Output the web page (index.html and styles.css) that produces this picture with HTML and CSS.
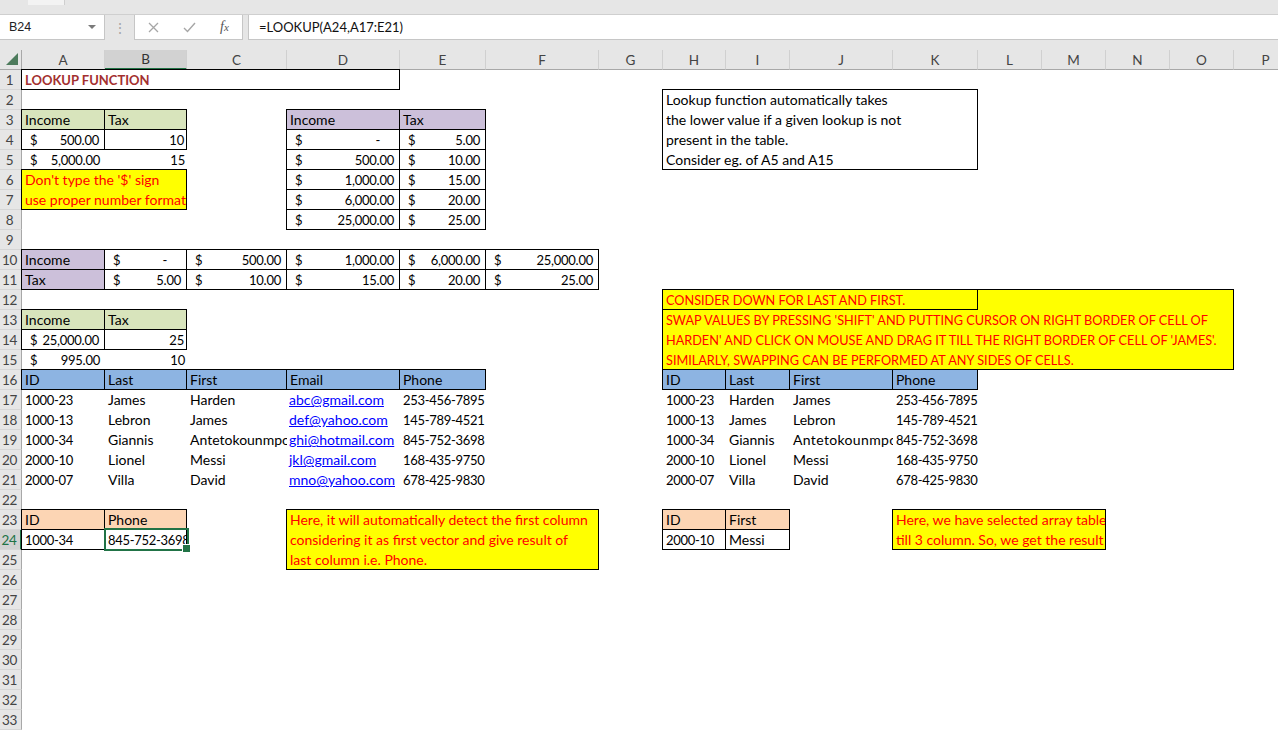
FILE: index.html
```html
<!DOCTYPE html>
<html lang="en">
<head>
<meta charset="utf-8">
<title>LOOKUP FUNCTION</title>
<link rel="stylesheet" href="styles.css">
</head>
<body>
<div class="top"><div class="tab"></div></div>
<div class="fbar">
  <div class="namebox"><span>B24</span><span class="arrow"></span></div>
  <div class="dots">&#8942;</div>
  <div class="btns">
    <svg class="ico-x" width="11" height="11" viewBox="0 0 11 11"><path d="M1 1L10 10M10 1L1 10" stroke="#a6a6a6" stroke-width="1.3" fill="none"/></svg>
    <svg class="ico-ok" width="13" height="11" viewBox="0 0 13 11"><path d="M1 6L4.5 9.5L12 1" stroke="#a6a6a6" stroke-width="1.4" fill="none"/></svg>
    <span class="fx"><i>f</i><i class="fxs">x</i></span>
  </div>
  <div class="finput">=LOOKUP(A24,A17:E21)</div>
</div>
<div class="gap"></div>

<div class="sheet">
  <div class="corner"><svg width="22" height="19" viewBox="0 0 22 19"><polygon points="18,3 18,15 6,15" fill="#4d7b5c"/></svg></div>
  <div class="ch cA">A</div><div class="ch cB csel">B</div><div class="ch cC">C</div><div class="ch cD">D</div>
  <div class="ch cE">E</div><div class="ch cF">F</div><div class="ch cG">G</div><div class="ch cH">H</div>
  <div class="ch cI">I</div><div class="ch cJ">J</div><div class="ch cK">K</div><div class="ch cL">L</div>
  <div class="ch cM">M</div><div class="ch cN">N</div><div class="ch cO">O</div><div class="ch cP">P</div>

  <div class="rh r1">1</div><div class="rh r2">2</div><div class="rh r3">3</div><div class="rh r4">4</div>
  <div class="rh r5">5</div><div class="rh r6">6</div><div class="rh r7">7</div><div class="rh r8">8</div>
  <div class="rh r9">9</div><div class="rh r10">10</div><div class="rh r11">11</div><div class="rh r12">12</div>
  <div class="rh r13">13</div><div class="rh r14">14</div><div class="rh r15">15</div><div class="rh r16">16</div>
  <div class="rh r17">17</div><div class="rh r18">18</div><div class="rh r19">19</div><div class="rh r20">20</div>
  <div class="rh r21">21</div><div class="rh r22">22</div><div class="rh r23">23</div><div class="rh r24 rsel">24</div>
  <div class="rh r25">25</div><div class="rh r26">26</div><div class="rh r27">27</div><div class="rh r28">28</div>
  <div class="rh r29">29</div><div class="rh r30">30</div><div class="rh r31">31</div><div class="rh r32">32</div>
  <div class="rh r33">33</div>

  <!-- Row 1 -->
  <div class="c r1 cA w4 bd bl bt title">LOOKUP FUNCTION</div>

  <!-- A3:B7 -->
  <div class="c r3 cA green bd bl bt">Income</div>
  <div class="c r3 cB green bd bt">Tax</div>
  <div class="c r4 cA acc bd bl"><span>$</span><span>500.00</span></div>
  <div class="c r4 cB num bd">10</div>
  <div class="c r5 cA acc"><span>$</span><span>5,000.00</span></div>
  <div class="c r5 cB num">15</div>
  <div class="c r6 cA w2 h2 box yellow red bd bl bt">
    <div class="ln">Don't type the '$' sign</div>
    <div class="ln">use proper number format</div>
  </div>

  <!-- D3:E8 -->
  <div class="c r3 cD lav bd bl bt">Income</div>
  <div class="c r3 cE lav bd bt">Tax</div>
  <div class="c r4 cD acc bd bl"><span>$</span><span class="dash">-</span></div>
  <div class="c r4 cE acc bd"><span>$</span><span>5.00</span></div>
  <div class="c r5 cD acc bd bl"><span>$</span><span>500.00</span></div>
  <div class="c r5 cE acc bd"><span>$</span><span>10.00</span></div>
  <div class="c r6 cD acc bd bl"><span>$</span><span>1,000.00</span></div>
  <div class="c r6 cE acc bd"><span>$</span><span>15.00</span></div>
  <div class="c r7 cD acc bd bl"><span>$</span><span>6,000.00</span></div>
  <div class="c r7 cE acc bd"><span>$</span><span>20.00</span></div>
  <div class="c r8 cD acc bd bl"><span>$</span><span>25,000.00</span></div>
  <div class="c r8 cE acc bd"><span>$</span><span>25.00</span></div>

  <!-- Rows 10-11 -->
  <div class="c r10 cA lav bd bl bt">Income</div>
  <div class="c r10 cB acc bd bt"><span>$</span><span class="dash">-</span></div>
  <div class="c r10 cC acc bd bt"><span>$</span><span>500.00</span></div>
  <div class="c r10 cD acc bd bt"><span>$</span><span>1,000.00</span></div>
  <div class="c r10 cE acc bd bt"><span>$</span><span>6,000.00</span></div>
  <div class="c r10 cF acc bd bt"><span>$</span><span>25,000.00</span></div>
  <div class="c r11 cA lav bd bl">Tax</div>
  <div class="c r11 cB acc bd"><span>$</span><span>5.00</span></div>
  <div class="c r11 cC acc bd"><span>$</span><span>10.00</span></div>
  <div class="c r11 cD acc bd"><span>$</span><span>15.00</span></div>
  <div class="c r11 cE acc bd"><span>$</span><span>20.00</span></div>
  <div class="c r11 cF acc bd"><span>$</span><span>25.00</span></div>

  <!-- Rows 13-15 -->
  <div class="c r13 cA green bd bl bt">Income</div>
  <div class="c r13 cB green bd bt">Tax</div>
  <div class="c r14 cA acc bd bl"><span>$</span><span>25,000.00</span></div>
  <div class="c r14 cB num bd">25</div>
  <div class="c r15 cA acc"><span>$</span><span>995.00</span></div>
  <div class="c r15 cB num">10</div>

  <!-- Rows 16-21 left table -->
  <div class="c r16 cA blue bd bl bt">ID</div>
  <div class="c r16 cB blue bd bt">Last</div>
  <div class="c r16 cC blue bd bt">First</div>
  <div class="c r16 cD blue bd bt">Email</div>
  <div class="c r16 cE blue bd bt">Phone</div>

  <div class="c r17 cA n">1000-23</div><div class="c r17 cB">James</div><div class="c r17 cC">Harden</div>
  <div class="c r17 cD link">abc@gmail.com</div><div class="c r17 cE n">253-456-7895</div>
  <div class="c r18 cA n">1000-13</div><div class="c r18 cB">Lebron</div><div class="c r18 cC">James</div>
  <div class="c r18 cD link">def@yahoo.com</div><div class="c r18 cE n">145-789-4521</div>
  <div class="c r19 cA n">1000-34</div><div class="c r19 cB">Giannis</div><div class="c r19 cC">Antetokounmpo</div>
  <div class="c r19 cD link">ghi@hotmail.com</div><div class="c r19 cE n">845-752-3698</div>
  <div class="c r20 cA n">2000-10</div><div class="c r20 cB">Lionel</div><div class="c r20 cC">Messi</div>
  <div class="c r20 cD link">jkl@gmail.com</div><div class="c r20 cE n">168-435-9750</div>
  <div class="c r21 cA n">2000-07</div><div class="c r21 cB">Villa</div><div class="c r21 cC">David</div>
  <div class="c r21 cD link">mno@yahoo.com</div><div class="c r21 cE n">678-425-9830</div>

  <!-- Rows 23-24 left -->
  <div class="c r23 cA peach bd bl bt">ID</div>
  <div class="c r23 cB peach bd bt">Phone</div>
  <div class="c r24 cA bd bl n">1000-34</div>
  <div class="c r24 cB bd n">845-752-3698</div>
  <div class="selbox r24 cB"></div>

  <div class="c r23 cD w3 h3 box yellow red bd bl bt">
    <div class="ln">Here, it will automatically detect the first column</div>
    <div class="ln">considering it as first vector and give result of</div>
    <div class="ln">last column i.e. Phone.</div>
  </div>

  <!-- Right notes -->
  <div class="c r2 cH w4 h4 box bd bl bt">
    <div class="ln">Lookup function automatically takes</div>
    <div class="ln">the lower value if a given lookup is not</div>
    <div class="ln">present in the table.</div>
    <div class="ln">Consider eg. of A5 and A15</div>
  </div>

  <div class="c r12 cH w8 h4 box yellow red caps bd bl bt">
    <div class="ln inner">CONSIDER DOWN FOR LAST AND FIRST.</div>
    <div class="ln">SWAP VALUES BY PRESSING 'SHIFT' AND PUTTING CURSOR ON RIGHT BORDER OF CELL OF</div>
    <div class="ln">HARDEN' AND CLICK ON MOUSE AND DRAG IT TILL THE RIGHT BORDER OF CELL OF 'JAMES'.</div>
    <div class="ln">SIMILARLY, SWAPPING CAN BE PERFORMED AT ANY SIDES OF CELLS.</div>
  </div>

  <div class="c r16 cH blue bd bl bt">ID</div>
  <div class="c r16 cI blue bd bt">Last</div>
  <div class="c r16 cJ blue bd bt">First</div>
  <div class="c r16 cK blue bd bt">Phone</div>

  <div class="c r17 cH n">1000-23</div><div class="c r17 cI">Harden</div><div class="c r17 cJ">James</div><div class="c r17 cK n">253-456-7895</div>
  <div class="c r18 cH n">1000-13</div><div class="c r18 cI">James</div><div class="c r18 cJ">Lebron</div><div class="c r18 cK n">145-789-4521</div>
  <div class="c r19 cH n">1000-34</div><div class="c r19 cI">Giannis</div><div class="c r19 cJ wide">Antetokounmpo</div><div class="c r19 cK n">845-752-3698</div>
  <div class="c r20 cH n">2000-10</div><div class="c r20 cI">Lionel</div><div class="c r20 cJ">Messi</div><div class="c r20 cK n">168-435-9750</div>
  <div class="c r21 cH n">2000-07</div><div class="c r21 cI">Villa</div><div class="c r21 cJ">David</div><div class="c r21 cK n">678-425-9830</div>

  <div class="c r23 cH peach bd bl bt">ID</div>
  <div class="c r23 cI peach bd bt">First</div>
  <div class="c r24 cH bd bl n">2000-10</div>
  <div class="c r24 cI bd">Messi</div>

  <div class="c r23 cK w3 h2 box yellow red bd bl bt">
    <div class="ln">Here, we have selected array table</div>
    <div class="ln">till 3 column. So, we get the result</div>
  </div>
</div>
</body>
</html>
```
FILE: styles.css
```css
* { box-sizing: border-box; }
html, body { margin: 0; padding: 0; }
body {
  width: 1278px;
  height: 730px;
  overflow: hidden;
  background: #ffffff;
  font-family: Lato, "Liberation Sans", sans-serif;
  color: #000;
}

/* ---------- top strip & formula bar ---------- */
.top {
  height: 15px;
  background: #e6e6e6;
  border-bottom: 1px solid #cfcfcf;
}
.tab {
  margin-left: 28px;
  width: 37px;
  height: 5px;
  background: #f3f3f3;
  border-right: 1px solid #cfcfcf;
}
.fbar {
  height: 25px;
  display: flex;
  background: #e6e6e6;
}
.namebox {
  width: 105px;
  background: #fff;
  border: 1px solid #c6c6c6;
  border-left: none;
  border-top: none;
  display: flex;
  align-items: center;
  justify-content: space-between;
  padding: 0 8px 0 9px;
  font-family: "Liberation Sans", sans-serif;
  font-size: 12.5px;
  color: #222;
}
.arrow {
  width: 0;
  height: 0;
  border-left: 4px solid transparent;
  border-right: 4px solid transparent;
  border-top: 4px solid #7a7a7a;
}
.dots {
  width: 29px;
  display: flex;
  align-items: center;
  justify-content: center;
  color: #a6a6a6;
  font-size: 14px;
}
.btns {
  width: 109px;
  background: #fff;
  border: 1px solid #c6c6c6;
  border-top: none;
  display: flex;
  align-items: center;
  padding-left: 13px;
}
.ico-x { margin-right: 24px; }
.ico-ok { margin-right: 24px; }
.fx {
  font-family: "Liberation Serif", serif;
  font-size: 14px;
  color: #555;
}
.fxs { font-size: 11px; }
.finput {
  flex: 1;
  margin-left: 5px;
  background: #fff;
  border-bottom: 1px solid #c6c6c6;
  border-left: 1px solid #c6c6c6;
  padding-left: 10px;
  display: flex;
  align-items: center;
  font-size: 13px;
  color: #111;
}
.gap {
  height: 10px;
  background: #e6e6e6;
}

/* ---------- sheet grid ---------- */
.sheet {
  display: grid;
  width: 1298px;
  grid-template-columns: 22px 83px 82px 100px 113px 86px 113px 64px 63px 64px 103px 85px 64px 64px 64px 64px 64px;
  grid-template-rows: repeat(34, 20px);
}

.corner {
  grid-row-start: 1;
  grid-column-start: 1;
  background: #e6e6e6;
  border-right: 1px solid #a8a8a8;
  border-bottom: 1px solid #a8a8a8;
}
.corner svg { display: block; }

.ch {
  grid-row-start: 1;
  background: #e6e6e6;
  border-right: 1px solid #d0d0d0;
  border-bottom: 1px solid #a8a8a8;
  display: flex;
  align-items: center;
  justify-content: center;
  font-size: 13.5px;
  color: #444;
}
.ch.csel {
  background: #d2d2d2;
  border-bottom: 2px solid #217346;
  color: #333;
}
.rh {
  grid-column-start: 1;
  background: #e6e6e6;
  border-right: 1px solid #a8a8a8;
  border-bottom: 1px solid #d6d6d6;
  text-align: center;
  padding-right: 2px;
  font-size: 13.5px;
  line-height: 20px;
  color: #444;
  letter-spacing: -0.4px;
}
.rh.rsel {
  background: #d2d2d2;
  color: #217346;
  border-right: 2px solid #217346;
}

/* column placement */
.cA { grid-column-start: 2; }
.cB { grid-column-start: 3; }
.cC { grid-column-start: 4; }
.cD { grid-column-start: 5; }
.cE { grid-column-start: 6; }
.cF { grid-column-start: 7; }
.cG { grid-column-start: 8; }
.cH { grid-column-start: 9; }
.cI { grid-column-start: 10; }
.cJ { grid-column-start: 11; }
.cK { grid-column-start: 12; }
.cL { grid-column-start: 13; }
.cM { grid-column-start: 14; }
.cN { grid-column-start: 15; }
.cO { grid-column-start: 16; }
.cP { grid-column-start: 17; }

/* row placement */
.r1 { grid-row-start: 2; }
.r2 { grid-row-start: 3; }
.r3 { grid-row-start: 4; }
.r4 { grid-row-start: 5; }
.r5 { grid-row-start: 6; }
.r6 { grid-row-start: 7; }
.r7 { grid-row-start: 8; }
.r8 { grid-row-start: 9; }
.r9 { grid-row-start: 10; }
.r10 { grid-row-start: 11; }
.r11 { grid-row-start: 12; }
.r12 { grid-row-start: 13; }
.r13 { grid-row-start: 14; }
.r14 { grid-row-start: 15; }
.r15 { grid-row-start: 16; }
.r16 { grid-row-start: 17; }
.r17 { grid-row-start: 18; }
.r18 { grid-row-start: 19; }
.r19 { grid-row-start: 20; }
.r20 { grid-row-start: 21; }
.r21 { grid-row-start: 22; }
.r22 { grid-row-start: 23; }
.r23 { grid-row-start: 24; }
.r24 { grid-row-start: 25; }
.r25 { grid-row-start: 26; }
.r26 { grid-row-start: 27; }
.r27 { grid-row-start: 28; }
.r28 { grid-row-start: 29; }
.r29 { grid-row-start: 30; }
.r30 { grid-row-start: 31; }
.r31 { grid-row-start: 32; }
.r32 { grid-row-start: 33; }
.r33 { grid-row-start: 34; }

.w2 { grid-column-end: span 2; }
.w3 { grid-column-end: span 3; }
.w4 { grid-column-end: span 4; }
.w8 { grid-column-end: span 8; }
.h2 { grid-row-end: span 2; }
.h3 { grid-row-end: span 3; }
.h4 { grid-row-end: span 4; }

/* ---------- cells ---------- */
.c {
  font-size: 14px;
  line-height: 20px;
  white-space: nowrap;
  overflow: hidden;
  padding: 0 2px 0 3px;
}
.bd {
  border-right: 1px solid #000;
  border-bottom: 1px solid #000;
}
.bl {
  border-left: 1px solid #000;
  margin-left: -1px;
}
.bt {
  border-top: 1px solid #000;
  margin-top: -1px;
}

.title {
  font-weight: 700;
  font-size: 13px;
  color: #a3302f;
}
.num { text-align: right; font-size: 13px; letter-spacing: -0.2px; }
.n { font-size: 13px; letter-spacing: -0.3px; }
.acc {
  display: flex;
  justify-content: space-between;
  padding: 0 5px 0 8px;
  font-size: 13px;
  letter-spacing: -0.25px;
}
.dash { margin-right: 14px; }
.wide { letter-spacing: 0.35px; }

.green { background: #d8e4bc; }
.lav { background: #ccc0da; }
.blue { background: #8db4e2; }
.peach { background: #fcd5b4; }
.yellow { background: #ffff00; }
.red { color: #ff0000; }

.link {
  color: #0000ff;
  text-decoration: underline;
  padding-left: 2px;
}

.box {
  display: flex;
  flex-direction: column;
  padding: 0;
}
.caps { font-size: 12.7px; }
.ln {
  height: 20px;
  line-height: 20px;
  padding-left: 3px;
  white-space: nowrap;
  flex: none;
}
.ln.inner {
  width: 315px;
  border-right: 1px solid #000;
  border-bottom: 1px solid #000;
}

.selbox {
  position: relative;
  margin: -2px -2px -1px -1px;
  border: 2px solid #217346;
}
.selbox::after {
  content: "";
  position: absolute;
  right: -4px;
  bottom: -4px;
  width: 7px;
  height: 7px;
  background: #217346;
  border: 1px solid #fff;
}
```
